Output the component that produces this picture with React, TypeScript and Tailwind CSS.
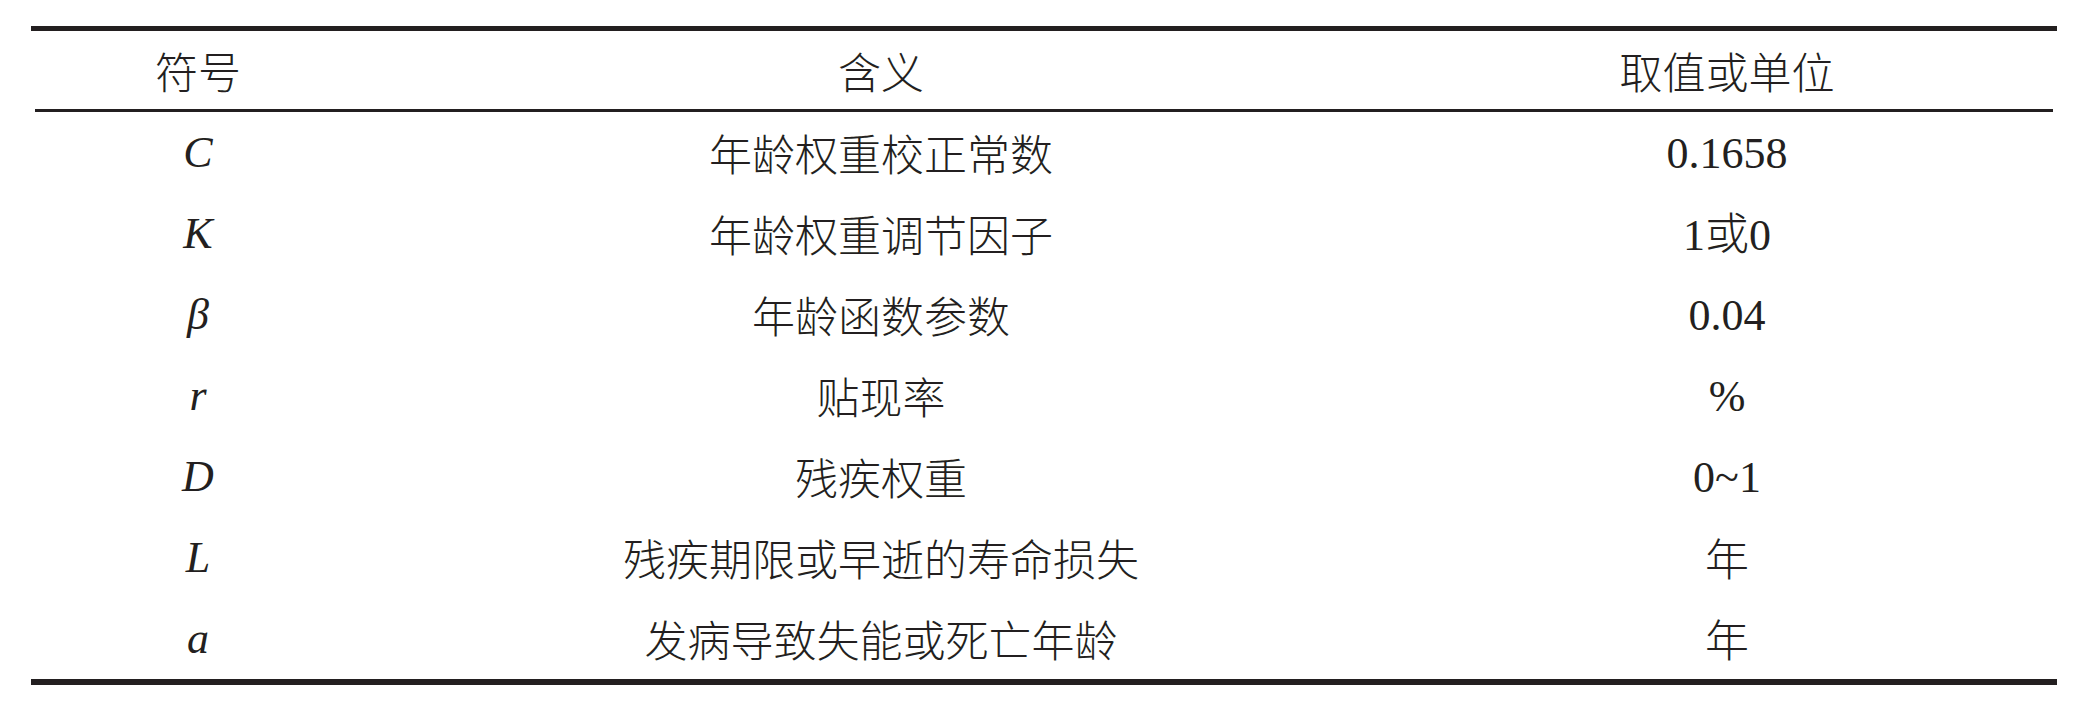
const rows = [
  { sym: "C", desc: "年龄权重校正常数", val: "0.1658" },
  { sym: "K", desc: "年龄权重调节因子", val: "1或0" },
  { sym: "β", desc: "年龄函数参数", val: "0.04" },
  { sym: "r", desc: "贴现率", val: "%" },
  { sym: "D", desc: "残疾权重", val: "0~1" },
  { sym: "L", desc: "残疾期限或早逝的寿命损失", val: "年" },
  { sym: "a", desc: "发病导致失能或死亡年龄", val: "年" },
];

const serif = "font-['Liberation_Serif',serif]";
const cjk = "font-['Noto_Sans_CJK_SC',sans-serif] font-light";

// Latin runs in Liberation Serif, CJK runs in Noto Sans CJK (light)
function Mixed({ text }: { text: string }) {
  const parts = text.split(/([\u4e00-\u9fff]+)/).filter(Boolean);
  return (
    <>
      {parts.map((p, i) =>
        /[\u4e00-\u9fff]/.test(p) ? (
          <span key={i} className={cjk}>{p}</span>
        ) : (
          <span key={i} className={serif}>{p}</span>
        )
      )}
    </>
  );
}

export default function App() {
  return (
    <div className="w-[2088px] h-[702px] bg-white pt-[26px] pl-[31px] text-[#231f20]">
      <div className="w-[2026px]">
        <div className="h-[5px] bg-[#231f20]" />
        <div className={`grid grid-cols-[334px_1032px_660px] h-[78px] items-center text-center text-[43px] leading-none ${cjk}`}>
          <div>符号</div>
          <div>含义</div>
          <div>取值或单位</div>
        </div>
        <div className="mx-[4px] h-[3px] bg-[#231f20]" />
        {rows.map((r) => (
          <div
            key={r.sym}
            className="grid grid-cols-[334px_1032px_660px] h-[81px] items-center text-center leading-none"
          >
            <div className={`italic text-[44px] ${serif}`}>{r.sym}</div>
            <div className={`text-[43px] ${cjk}`}>{r.desc}</div>
            <div className="text-[44px]">
              <Mixed text={r.val} />
            </div>
          </div>
        ))}
        <div className="h-[6px] bg-[#231f20]" />
      </div>
    </div>
  );
}
